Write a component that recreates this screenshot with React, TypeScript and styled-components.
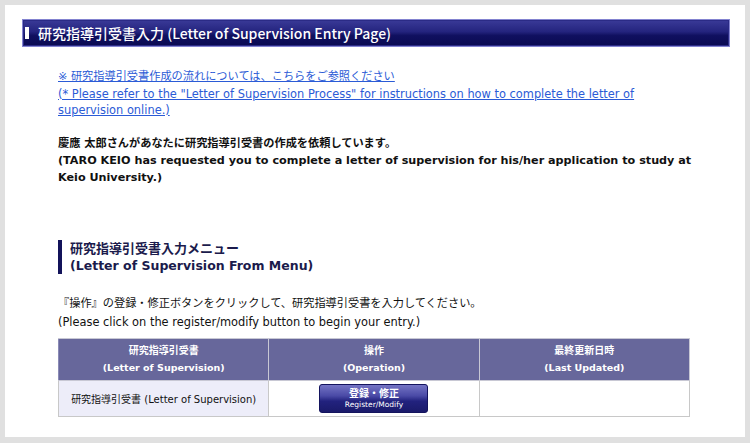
import styled, { createGlobalStyle } from 'styled-components';

const GlobalStyle = createGlobalStyle`
  html, body {
    margin: 0;
    padding: 0;
    background: #e0e0e0;
  }
  body {
    font-family: "DejaVu Sans", "Noto Sans CJK JP", sans-serif;
    color: #111;
  }
`;

const Page = styled.div`
  padding: 5px;
  width: 750px;
  height: 443px;
  box-sizing: border-box;
`;

const Panel = styled.div`
  background: #fff;
  height: 432px;
  padding: 14px 15px 0 17px;
  box-sizing: border-box;
`;

const TitleBar = styled.h1`
  margin: 0;
  height: 28px;
  box-sizing: border-box;
  border: 1px solid #8383d0;
  box-shadow: inset 0 0 0 1px #2b2b86;
  background: linear-gradient(#3a3a98 0%, #24247e 45%, #10105f 60%, #0a0a52 100%);
  display: flex;
  align-items: center;
  padding-left: 2px;
  gap: 9px;
  color: #fff;
  font-family: "Noto Sans CJK JP", sans-serif;
  font-size: 14px;
  font-weight: 500;
`;

const TitleMark = styled.span`
  width: 4px;
  height: 12px;
  background: #fff;
`;

const Content = styled.div`
  padding: 0 38px 0 36px;
`;

// one line of Japanese text, kept as its own block so the CJK font does not stretch the line box
const JaLine = styled.span<{ $size?: number }>`
  display: block;
  font-size: ${({ $size }) => $size ?? 11.2}px;
`;

const EnLine = styled.span<{ $size?: number }>`
  display: block;
  font-size: ${({ $size }) => $size ?? 11.4}px;
`;

const GuideLink = styled.a`
  display: block;
  margin-top: 22px;
  color: #2b5bd6;
  line-height: 16.5px;
  text-decoration: underline;
`;

const Request = styled.p`
  margin: 16px 0 0;
  font-weight: bold;
  line-height: 17px;
`;

const SectionHeading = styled.h2`
  margin: 54px 0 0;
  border-left: 4px solid #13135a;
  padding-left: 8px;
  color: #1b1b4c;
  font-weight: bold;
  line-height: 17px;
`;

const Notice = styled.p`
  margin: 21px 0 0;
  line-height: 18px;
`;

const Table = styled.table`
  margin-top: 7px;
  width: 632px;
  border-collapse: collapse;
  table-layout: fixed;
`;

const HeadCell = styled.th`
  height: 41px;
  padding: 0;
  background: #67679b;
  border: 1px solid #c8c8d4;
  border-left-color: #8a8ab6;
  color: #fff;
  font-weight: bold;
  line-height: 17px;
  text-align: center;
`;

const BodyCell = styled.td<{ $shade?: boolean }>`
  height: 35px;
  padding: 0;
  background: ${({ $shade }) => ($shade ? '#ededf9' : '#fff')};
  border: 1px solid #c8c8c8;
  font-size: 10px;
  text-align: center;
  vertical-align: middle;
`;

const EditButton = styled.button`
  width: 109px;
  height: 29px;
  padding: 0;
  border: 1px solid #14145e;
  border-radius: 3px;
  background: linear-gradient(#7474c4 0%, #4a4aa6 40%, #22227e 60%, #1a1a6a 100%);
  color: #fff;
  font-family: "DejaVu Sans", "Noto Sans CJK JP", sans-serif;
  display: inline-flex;
  flex-direction: column;
  align-items: center;
  justify-content: center;
  vertical-align: middle;
  cursor: pointer;
`;

const ButtonMain = styled.span`
  font-family: "Noto Sans CJK JP", sans-serif;
  font-size: 10px;
  font-weight: bold;
  line-height: 13px;
`;

const ButtonSub = styled.span`
  font-size: 7.5px;
  line-height: 11px;
`;

export default function App() {
  return (
    <Page>
      <GlobalStyle />
      <Panel>
        <TitleBar>
          <TitleMark />
          研究指導引受書入力 (Letter of Supervision Entry Page)
        </TitleBar>
        <Content>
          <GuideLink href="#">
            <JaLine>※ 研究指導引受書作成の流れについては、こちらをご参照ください</JaLine>
            <EnLine>
              (* Please refer to the "Letter of Supervision Process" for instructions on how to complete the letter
              of supervision online.)
            </EnLine>
          </GuideLink>
          <Request>
            <JaLine>慶應 太郎さんがあなたに研究指導引受書の作成を依頼しています。</JaLine>
            <EnLine $size={11.2}>
              (TARO KEIO has requested you to complete a letter of supervision for his/her application to study at
              Keio University.)
            </EnLine>
          </Request>
          <SectionHeading>
            <JaLine $size={13}>研究指導引受書入力メニュー</JaLine>
            <EnLine $size={12.5}>(Letter of Supervision From Menu)</EnLine>
          </SectionHeading>
          <Notice>
            <JaLine>『操作』の登録・修正ボタンをクリックして、研究指導引受書を入力してください。</JaLine>
            <EnLine>(Please click on the register/modify button to begin your entry.)</EnLine>
          </Notice>
          <Table>
            <thead>
              <tr>
                <HeadCell>
                  <JaLine $size={10}>研究指導引受書</JaLine>
                  <EnLine $size={9.5}>(Letter of Supervision)</EnLine>
                </HeadCell>
                <HeadCell>
                  <JaLine $size={10}>操作</JaLine>
                  <EnLine $size={9.5}>(Operation)</EnLine>
                </HeadCell>
                <HeadCell>
                  <JaLine $size={10}>最終更新日時</JaLine>
                  <EnLine $size={9.5}>(Last Updated)</EnLine>
                </HeadCell>
              </tr>
            </thead>
            <tbody>
              <tr>
                <BodyCell $shade>研究指導引受書 (Letter of Supervision)</BodyCell>
                <BodyCell>
                  <EditButton type="button">
                    <ButtonMain>登録・修正</ButtonMain>
                    <ButtonSub>Register/Modify</ButtonSub>
                  </EditButton>
                </BodyCell>
                <BodyCell />
              </tr>
            </tbody>
          </Table>
        </Content>
      </Panel>
    </Page>
  );
}
